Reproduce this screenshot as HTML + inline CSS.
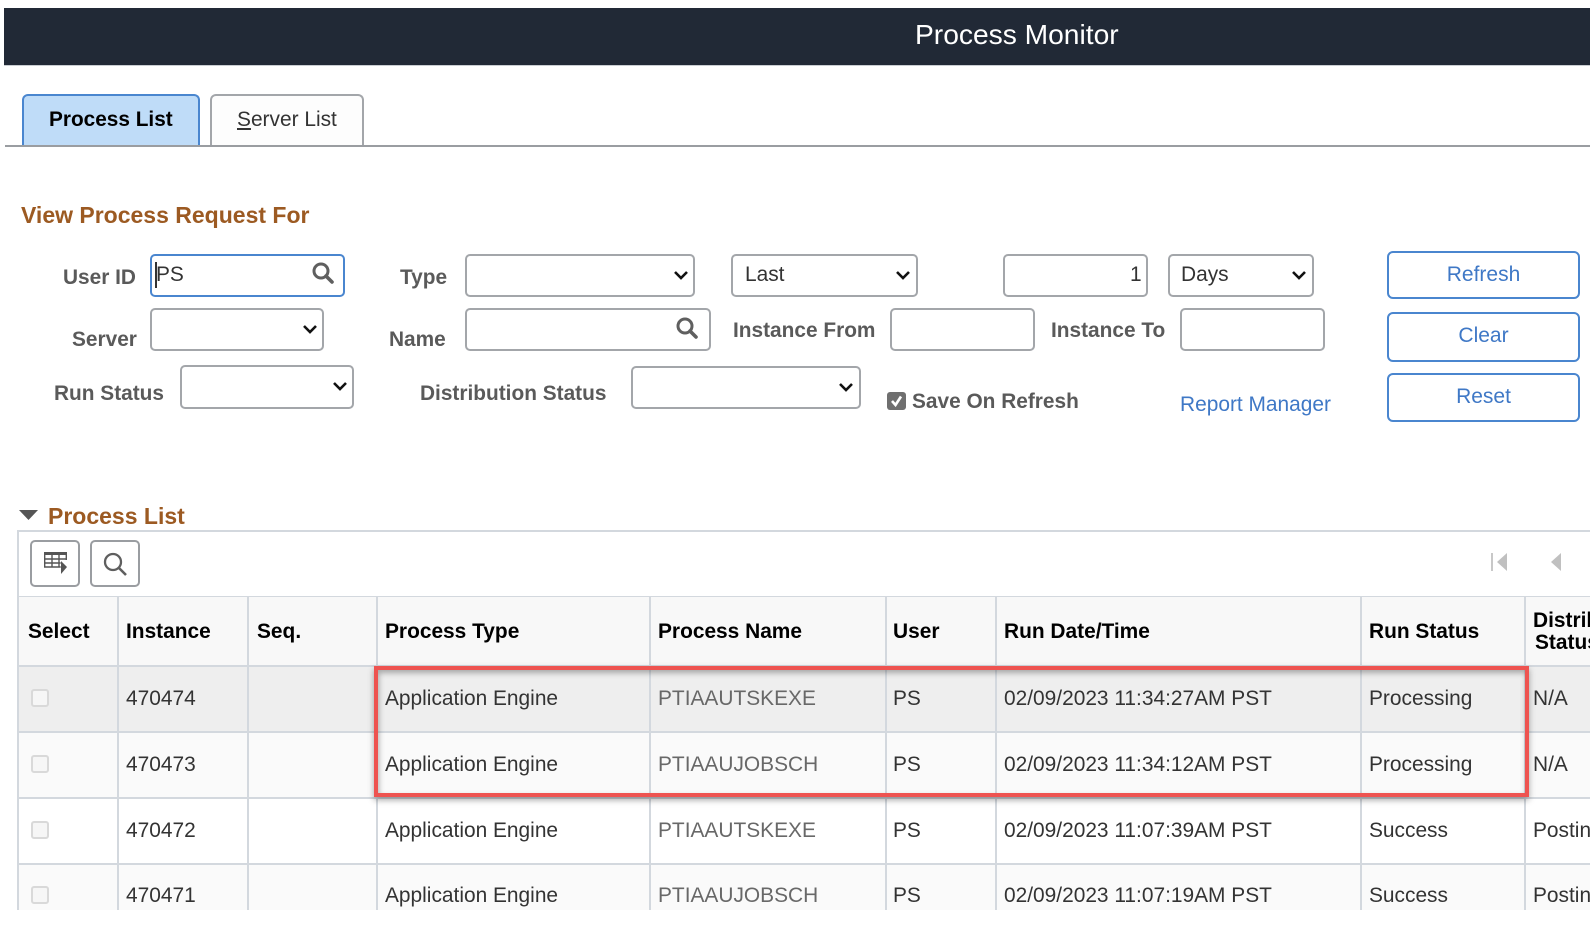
<!DOCTYPE html>
<html lang="en"><head><meta charset="utf-8"><title>Process Monitor</title>
<style>
html,body{margin:0;padding:0;background:#fff}
#p{position:relative;width:1594px;height:930px;overflow:hidden;background:#fff;font-family:"Liberation Sans",Arial,sans-serif;font-size:20.9px;color:#333;filter:blur(.3px)}
#p div,#p span.t,#p svg{position:absolute}
.t{white-space:nowrap;line-height:26px;height:26px}
.lb{font-weight:bold;color:#5a5a5a;font-size:20.85px}
.b{font-weight:bold;color:#000}
.o{font-weight:bold;color:#9c5a22;font-size:23px}
.box{box-sizing:border-box;border:2px solid #a3a6aa;border-radius:5px;background:#fff}
.btn{box-sizing:border-box;left:1387px;width:193px;border:2px solid #4a86cf;border-radius:6px;background:#fff;color:#3f78c6;text-align:center;font-size:21px}
.v{width:2px;background:#d3d8de}
.h{left:17px;width:1577px;height:2px;background:#d3d8de}
.cb{left:31px;width:18px;height:18px;box-sizing:border-box;border:2px solid #d9d9d9;border-radius:3px;background:#f6f6f6}
.g{color:#686868}
</style></head><body><div id="p">

<div style="left:4px;top:8px;width:1590px;height:57px;background:#212936"></div>
<div style="left:4px;top:65px;width:1590px;height:1px;background:#c9cdd2"></div>
<span class="t" style="left:915px;top:20px;font-size:28.2px;line-height:28px;height:28px;color:#fff">Process Monitor</span>

<div style="left:22px;top:94px;width:178px;height:53px;box-sizing:border-box;background:#bfdcf8;border:2px solid #4a86cf;border-bottom:0;border-radius:6px 6px 0 0"></div>
<div style="left:210px;top:94px;width:154px;height:53px;box-sizing:border-box;background:#fdfdfd;border:2px solid #a3a6aa;border-bottom:0;border-radius:6px 6px 0 0"></div>
<div style="left:5px;top:145px;width:1589px;height:2px;background:#9a9da1"></div>
<span class="t" style="left:49px;top:107px;font-weight:bold;color:#000;font-size:20.8px">Process List</span>
<span class="t" style="left:237px;top:107px;color:#333;font-size:20.9px"><u>S</u>erver List</span>

<span class="t o" style="left:21px;top:202px">View Process Request For</span>

<span class="t lb" style="left:63px;top:265px">User ID</span>
<span class="t lb" style="left:72px;top:327px">Server</span>
<span class="t lb" style="left:54px;top:381px">Run Status</span>
<span class="t lb" style="left:400px;top:265px">Type</span>
<span class="t lb" style="left:389px;top:327px">Name</span>
<span class="t lb" style="left:733px;top:318px">Instance From</span>
<span class="t lb" style="left:1051px;top:318px">Instance To</span>
<span class="t lb" style="left:420px;top:381px">Distribution Status</span>
<span class="t lb" style="left:912px;top:389px">Save On Refresh</span>
<span class="t" style="left:1180px;top:392px;color:#3f78c6">Report Manager</span>

<div class="box" style="left:150px;top:254px;width:195px;height:43px;border-color:#4a86cf"></div>
<div style="left:155px;top:262px;width:2px;height:26px;background:#333"></div>
<span class="t" style="left:156px;top:262px">PS</span>
<svg style="left:311px;top:261px" width="24" height="24" viewBox="0 0 24 24"><circle cx="10" cy="10" r="7" fill="none" stroke="#5f5f5f" stroke-width="3"/><path d="M15 15l6 6" stroke="#5f5f5f" stroke-width="3.6" stroke-linecap="round"/></svg>

<div class="box" style="left:150px;top:308px;width:174px;height:43px"></div>
<svg style="left:302px;top:324px" width="16" height="11" viewBox="0 0 16 11"><path d="M2 2l6 6 6-6" fill="none" stroke="#111" stroke-width="2.6"/></svg>
<div class="box" style="left:180px;top:365px;width:174px;height:44px"></div>
<svg style="left:332px;top:381px" width="16" height="11" viewBox="0 0 16 11"><path d="M2 2l6 6 6-6" fill="none" stroke="#111" stroke-width="2.6"/></svg>

<div class="box" style="left:465px;top:254px;width:230px;height:43px"></div>
<svg style="left:673px;top:270px" width="16" height="11" viewBox="0 0 16 11"><path d="M2 2l6 6 6-6" fill="none" stroke="#111" stroke-width="2.6"/></svg>
<div class="box" style="left:731px;top:254px;width:187px;height:43px"></div>
<span class="t" style="left:745px;top:262px">Last</span>
<svg style="left:895px;top:270px" width="16" height="11" viewBox="0 0 16 11"><path d="M2 2l6 6 6-6" fill="none" stroke="#111" stroke-width="2.6"/></svg>
<div class="box" style="left:1003px;top:254px;width:145px;height:43px"></div>
<span class="t" style="left:1130px;top:262px">1</span>
<div class="box" style="left:1168px;top:254px;width:146px;height:43px"></div>
<span class="t" style="left:1181px;top:262px">Days</span>
<svg style="left:1291px;top:270px" width="16" height="11" viewBox="0 0 16 11"><path d="M2 2l6 6 6-6" fill="none" stroke="#111" stroke-width="2.6"/></svg>

<div class="box" style="left:465px;top:308px;width:246px;height:43px"></div>
<svg style="left:675px;top:316px" width="24" height="24" viewBox="0 0 24 24"><circle cx="10" cy="10" r="7" fill="none" stroke="#5f5f5f" stroke-width="3"/><path d="M15 15l6 6" stroke="#5f5f5f" stroke-width="3.6" stroke-linecap="round"/></svg>
<div class="box" style="left:890px;top:308px;width:145px;height:43px"></div>
<div class="box" style="left:1180px;top:308px;width:145px;height:43px"></div>
<div class="box" style="left:631px;top:366px;width:230px;height:43px"></div>
<svg style="left:838px;top:382px" width="16" height="11" viewBox="0 0 16 11"><path d="M2 2l6 6 6-6" fill="none" stroke="#111" stroke-width="2.6"/></svg>

<div style="left:887px;top:392px;width:19px;height:18px;background:#6f6f6f;border-radius:3px"></div>
<svg style="left:887px;top:392px" width="19" height="18" viewBox="0 0 19 18"><path d="M5 9l3.5 4L14 4.5" fill="none" stroke="#fff" stroke-width="2.6"/></svg>

<div class="btn" style="top:251px;height:48px;line-height:43px">Refresh</div>
<div class="btn" style="top:312px;height:50px;line-height:43px">Clear</div>
<div class="btn" style="top:373px;height:49px;line-height:43px">Reset</div>

<svg style="left:19px;top:510px" width="19" height="10" viewBox="0 0 19 10"><path d="M0 0h19L9.500 10z" fill="#555"/></svg>
<span class="t o" style="left:48px;top:503px">Process List</span>

<div class="h" style="top:530px"></div>
<div class="h" style="top:596px"></div>
<div style="left:17px;top:597px;width:1577px;height:69px;background:#f8f8f8"></div>
<div style="left:17px;top:666px;width:1577px;height:66px;background:#eeeeee"></div>
<div style="left:17px;top:732px;width:1577px;height:66px;background:#fafafa"></div>
<div style="left:17px;top:798px;width:1577px;height:66px;background:#fff"></div>
<div style="left:17px;top:864px;width:1577px;height:46px;background:#fafafa"></div>
<div class="h" style="top:665px"></div>
<div class="h" style="top:731px"></div>
<div class="h" style="top:797px"></div>
<div class="h" style="top:863px"></div>
<div class="v" style="left:17px;top:530px;height:380px"></div>
<div class="v" style="left:117px;top:597px;height:313px"></div>
<div class="v" style="left:247px;top:597px;height:313px"></div>
<div class="v" style="left:376px;top:597px;height:313px"></div>
<div class="v" style="left:649px;top:597px;height:313px"></div>
<div class="v" style="left:885px;top:597px;height:313px"></div>
<div class="v" style="left:995px;top:597px;height:313px"></div>
<div class="v" style="left:1360px;top:597px;height:313px"></div>
<div class="v" style="left:1524px;top:597px;height:313px"></div>

<div class="box" style="left:30px;top:540px;width:50px;height:47px;border-color:#9a9da1"></div>
<div class="box" style="left:90px;top:540px;width:50px;height:47px;border-color:#9a9da1"></div>
<svg style="left:44px;top:551px" width="24" height="24" viewBox="0 0 24 24"><path d="M0 1h23v3H0z" fill="#555"/><path d="M.7 4v12h16M.7 8h22M.7 12h16M8 4v12M15 4v12M22.300 4v5" fill="none" stroke="#555" stroke-width="1.400"/><path d="M17 10l6 6-6 7z" fill="#555"/></svg>
<svg style="left:102px;top:551px" width="26" height="26" viewBox="0 0 26 26"><circle cx="11" cy="11" r="8" fill="none" stroke="#5f5f5f" stroke-width="2.300"/><path d="M17 17l7 7" stroke="#5f5f5f" stroke-width="2.600"/></svg>
<svg style="left:1491px;top:552px" width="18" height="20" viewBox="0 0 18 20"><path d="M1 1v18" stroke="#c8c8c8" stroke-width="2"/><path d="M16 1v18L6 10z" fill="#c0c0c0"/></svg>
<svg style="left:1550px;top:552px" width="12" height="20" viewBox="0 0 12 20"><path d="M11 1v18L1 10z" fill="#c0c0c0"/></svg>

<span class="t b" style="left:28px;top:619px">Select</span>
<span class="t b" style="left:126px;top:619px">Instance</span>
<span class="t b" style="left:257px;top:619px">Seq.</span>
<span class="t b" style="left:385px;top:619px">Process Type</span>
<span class="t b" style="left:658px;top:619px">Process Name</span>
<span class="t b" style="left:893px;top:619px">User</span>
<span class="t b" style="left:1004px;top:619px">Run Date/Time</span>
<span class="t b" style="left:1369px;top:619px">Run Status</span>
<span class="t b" style="left:1533px;top:608px">Distribution</span>
<span class="t b" style="left:1535px;top:630px">Status</span>

<div class="cb" style="top:689px"></div><div class="cb" style="top:755px"></div><div class="cb" style="top:821px"></div><div class="cb" style="top:886px"></div>

<span class="t" style="left:126px;top:686px">470474</span>
<span class="t" style="left:385px;top:686px">Application Engine</span>
<span class="t g" style="left:658px;top:686px">PTIAAUTSKEXE</span>
<span class="t" style="left:893px;top:686px">PS</span>
<span class="t" style="left:1004px;top:686px">02/09/2023 11:34:27AM PST</span>
<span class="t" style="left:1369px;top:686px">Processing</span>
<span class="t" style="left:1533px;top:686px">N/A</span>

<span class="t" style="left:126px;top:752px">470473</span>
<span class="t" style="left:385px;top:752px">Application Engine</span>
<span class="t g" style="left:658px;top:752px">PTIAAUJOBSCH</span>
<span class="t" style="left:893px;top:752px">PS</span>
<span class="t" style="left:1004px;top:752px">02/09/2023 11:34:12AM PST</span>
<span class="t" style="left:1369px;top:752px">Processing</span>
<span class="t" style="left:1533px;top:752px">N/A</span>

<span class="t" style="left:126px;top:818px">470472</span>
<span class="t" style="left:385px;top:818px">Application Engine</span>
<span class="t g" style="left:658px;top:818px">PTIAAUTSKEXE</span>
<span class="t" style="left:893px;top:818px">PS</span>
<span class="t" style="left:1004px;top:818px">02/09/2023 11:07:39AM PST</span>
<span class="t" style="left:1369px;top:818px">Success</span>
<span class="t" style="left:1533px;top:818px">Posting</span>

<div style="left:0;top:865px;width:1594px;height:45px;overflow:hidden">
<span class="t" style="left:126px;top:18px">470471</span>
<span class="t" style="left:385px;top:18px">Application Engine</span>
<span class="t g" style="left:658px;top:18px">PTIAAUJOBSCH</span>
<span class="t" style="left:893px;top:18px">PS</span>
<span class="t" style="left:1004px;top:18px">02/09/2023 11:07:19AM PST</span>
<span class="t" style="left:1369px;top:18px">Success</span>
<span class="t" style="left:1533px;top:18px">Posting</span>
</div>

<div style="left:374px;top:666px;width:1155px;height:131px;box-sizing:border-box;border:4px solid #ee5350;box-shadow:0 3px 6px rgba(0,0,0,.35),inset 1px 3px 6px rgba(0,0,0,.3)"></div>

<div style="left:1590px;top:0;width:4px;height:930px;background:#fff"></div>

</div></body></html>
